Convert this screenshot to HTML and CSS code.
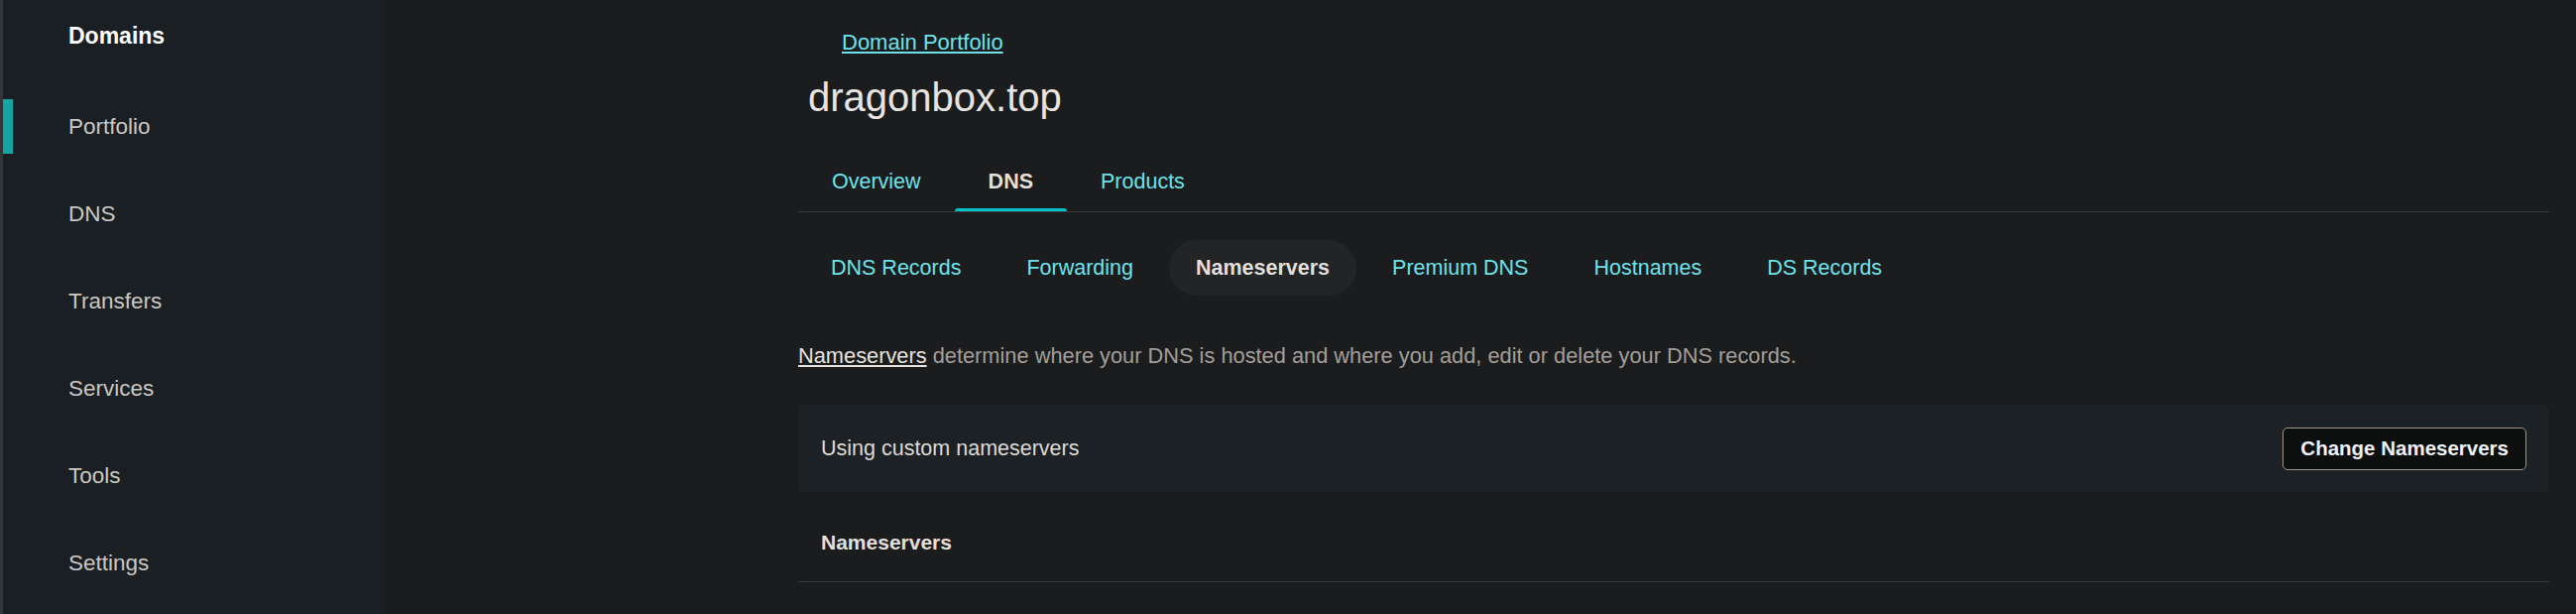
FILE: index.html
```html
<!DOCTYPE html>
<html lang="en">
<head>
<meta charset="utf-8">
<title>dragonbox.top - DNS</title>
<link rel="stylesheet" href="styles.css">
</head>
<body>
<div class="layout">
  <aside class="sidebar">
    <div class="side-title">Domains</div>
    <nav class="side-nav">
      <a class="side-item active">Portfolio</a>
      <a class="side-item">DNS</a>
      <a class="side-item">Transfers</a>
      <a class="side-item">Services</a>
      <a class="side-item">Tools</a>
      <a class="side-item">Settings</a>
    </nav>
  </aside>
  <main class="main">
    <a class="crumb">Domain Portfolio</a>
    <h1 class="title">dragonbox.top</h1>
    <div class="tabs">
      <a class="tab">Overview</a>
      <a class="tab active">DNS</a>
      <a class="tab">Products</a>
    </div>
    <div class="subtabs">
      <a class="subtab">DNS Records</a>
      <a class="subtab">Forwarding</a>
      <a class="subtab active">Nameservers</a>
      <a class="subtab">Premium DNS</a>
      <a class="subtab">Hostnames</a>
      <a class="subtab">DS Records</a>
    </div>
    <p class="desc"><a class="desc-link">Nameservers</a> determine where your DNS is hosted and where you add, edit or delete your DNS records.</p>
    <div class="card">
      <span class="card-text">Using custom nameservers</span>
      <button class="btn">Change Nameservers</button>
    </div>
    <div class="ns-head">Nameservers</div>
    <div class="ns-row">ns1.dnsowl.com</div>
  </main>
</div>
</body>
</html>
```
FILE: styles.css
```css
html, body {
  margin: 0;
  padding: 0;
}
body {
  background: #1b1c1e;
  font-family: "Liberation Sans", Arial, sans-serif;
  height: 619px;
  overflow: hidden;
}
.layout {
  display: flex;
  height: 619px;
}
.sidebar {
  width: 384px;
  flex: none;
  background: #1a1f23;
  border-left: 3px solid #33373a;
  padding-top: 21px;
}
.side-title {
  padding-left: 66px;
  font-size: 23px;
  line-height: 30px;
  font-weight: 700;
  color: #ffffff;
}
.side-nav {
  display: flex;
  flex-direction: column;
  gap: 33px;
  margin-top: 49px;
}
.side-item {
  display: block;
  height: 55px;
  line-height: 55px;
  font-size: 22.5px;
  color: #cbc7c2;
  border-left: 10px solid transparent;
  padding-left: 56px;
}
.side-item.active {
  border-left-color: #12a5a3;
}
.main {
  flex: 1;
  min-width: 0;
  padding: 28px 27px 0 418px;
}
.crumb {
  display: inline-block;
  margin-left: 44px;
  font-size: 22px;
  line-height: 30px;
  color: #6ee2ea;
  text-decoration: underline;
  text-underline-offset: 2px;
}
.title {
  margin: 17px 0 0 10px;
  font-size: 40px;
  line-height: 46px;
  font-weight: 400;
  color: #e8e4e0;
}
.tabs {
  display: flex;
  margin-top: 47px;
  border-bottom: 1px solid #38393b;
}
.tab {
  display: flex;
  flex-direction: column;
  padding: 0 34px;
  font-size: 21.5px;
  line-height: 30px;
  color: #6ee2ea;
}
.tab::after {
  content: "";
  display: block;
  height: 3px;
  margin: 12px -34px 0;
  border-radius: 3px 3px 0 0;
}
.tab.active {
  color: #e3dfda;
  font-weight: 700;
}
.tab.active::after {
  background: #00c3c9;
}
.subtabs {
  display: flex;
  gap: 6px;
  margin: 28px 0 0 3px;
}
.subtab {
  height: 56px;
  line-height: 57px;
  padding: 0 30px;
  border-radius: 28px;
  font-size: 21.5px;
  color: #6ee2ea;
}
.subtab.active {
  background: #222426;
  color: #e3dfda;
  font-weight: 700;
  padding: 0 27px;
}
.desc {
  margin: 45px 0 0;
  font-size: 21.8px;
  line-height: 31px;
  color: #a39f98;
}
.desc-link {
  color: #e6e2dd;
  text-decoration: underline;
  text-underline-offset: 2px;
}
.card {
  display: flex;
  align-items: center;
  justify-content: space-between;
  height: 88px;
  margin-top: 34px;
  padding: 0 23px;
  background: #1b2125;
  border-radius: 8px;
}
.card-text {
  font-size: 21.5px;
  line-height: 32px;
  color: #dedad5;
}
.btn {
  height: 43px;
  padding: 0 17px;
  background: #0d0e0e;
  border: 1.5px solid #9e968a;
  border-radius: 5px;
  font-family: "Liberation Sans", Arial, sans-serif;
  font-size: 20.5px;
  font-weight: 700;
  color: #eef2f7;
}
.ns-head {
  padding: 36px 23px 24px;
  font-size: 21px;
  line-height: 30px;
  font-weight: 700;
  color: #e3dfda;
  border-bottom: 1px solid #38393b;
}
.ns-row {
  padding: 29px 23px 0;
  font-size: 21px;
  line-height: 30px;
  color: #c8c4bf;
}
```
